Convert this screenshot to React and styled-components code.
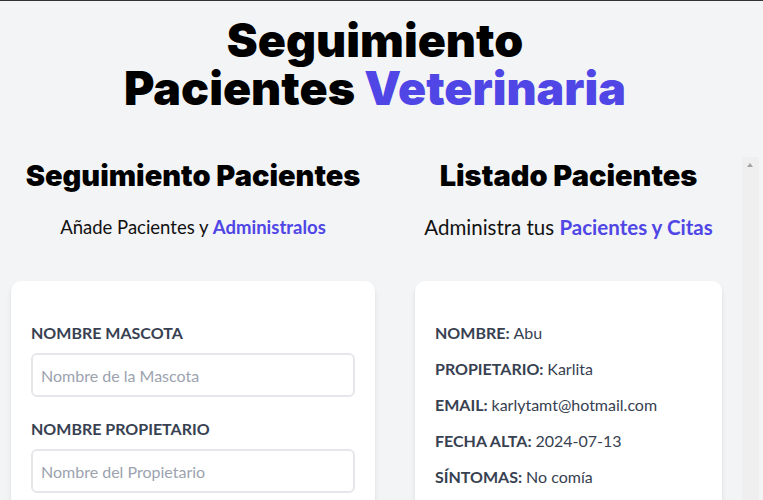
import React from "react";
import styled, { createGlobalStyle } from "styled-components";

const Global = createGlobalStyle`
  html, body { margin: 0; padding: 0; overflow: hidden; }
  body {
    background: #f3f4f6;
    font-family: Lato, "Noto Sans", sans-serif;
    color: #111827;
  }
  * { box-sizing: border-box; }
`;

const Page = styled.div`
  height: 100vh;
  overflow: hidden;
  border-top: 1px solid #333;
  padding-top: 15px;
`;

const Header = styled.header`
  width: 750px;
`;

const Title = styled.h1`
  margin: 0 auto;
  width: 540px;
  text-align: center;
  font-family: Inter, Lato, sans-serif;
  font-weight: 900;
  font-size: 46.5px;
  line-height: 48px;
  color: #000;
`;

const Accent = styled.span`
  color: #4f46e5;
  font-weight: ${(p) => (p.$bold ? 700 : "inherit")};
`;

const Columns = styled.main`
  display: flex;
  align-items: flex-start;
  margin-top: 45px;
  padding-left: 11px;
  gap: 20px;
`;

const FormColumn = styled.section`
  width: 364px;
  flex: none;
`;

const ListColumn = styled.section`
  width: 364px;
  flex: none;
  height: 100vh;
  display: flex;
`;

const ListInner = styled.div`
  flex: 1;
  min-width: 0;
  padding: 0 20px;
  overflow-y: auto;
  scrollbar-width: none;
`;

const ScrollRail = styled.div`
  width: 17px;
  flex: none;
  background: #efeff0;
  position: relative;
  &::before {
    content: "";
    position: absolute;
    left: 5px;
    top: 6px;
    border-left: 3.5px solid transparent;
    border-right: 3.5px solid transparent;
    border-bottom: 4px solid #a3a3a3;
  }
`;

const SectionTitle = styled.h2`
  margin: 0;
  padding-top: 2px;
  text-align: center;
  font-family: Inter, Lato, sans-serif;
  font-weight: 900;
  font-size: 29px;
  line-height: 34px;
  color: #000;
`;

const Lead = styled.p`
  margin: 20px 0 40px;
  text-align: center;
  font-size: ${(p) => (p.$large ? "20.5px" : "18.5px")};
  line-height: 28px;
  color: #111;
`;

const Card = styled.div`
  background: #fff;
  border-radius: 10px;
  box-shadow: 0 4px 6px -1px rgba(0, 0, 0, 0.1), 0 2px 4px -2px rgba(0, 0, 0, 0.1);
  padding: 40px 20px;
  margin-bottom: 40px;
`;

const Field = styled.div`
  margin-bottom: 20px;
`;

const Label = styled.label`
  display: block;
  color: #374151;
  text-transform: uppercase;
  font-weight: 700;
  font-size: 16px;
  line-height: 24px;
`;

const Input = styled.input`
  display: block;
  width: 100%;
  margin-top: 8px;
  padding: 8px;
  border: 2px solid #e5e7eb;
  border-radius: 6px;
  font-family: inherit;
  font-size: 16px;
  line-height: 24px;
  height: 44px;
  color: #374151;
  outline: none;
  &::placeholder { color: #9ca3af; }
`;

const Line = styled.p`
  margin: 0 0 12px;
  font-size: 16px;
  line-height: 24px;
  font-weight: 700;
  color: #374151;
  text-transform: uppercase;
`;

const Value = styled.span`
  font-weight: 400;
  text-transform: none;
`;

const Actions = styled.div`
  display: flex;
  justify-content: space-between;
  margin-top: 40px;
`;

const Button = styled.button`
  padding: 8px 40px;
  border: 0;
  border-radius: 8px;
  color: #fff;
  font-weight: 700;
  text-transform: uppercase;
  font-family: inherit;
  font-size: 16px;
  background: ${(p) => (p.$danger ? "#dc2626" : "#4f46e5")};
`;

const patients = [
  { nombre: "Abu", propietario: "Karlita", email: "karlytamt@hotmail.com", fecha: "2024-07-13", sintomas: "No comía" },
  { nombre: "Firulais", propietario: "Pedro", email: "pedro@correo.com", fecha: "2024-07-10", sintomas: "Dolor de pata" },
];

export default function App() {
  return (
    <>
      <Global />
      <Page>
        <Header>
          <Title>
            Seguimiento<br />Pacientes <Accent>Veterinaria</Accent>
          </Title>
        </Header>
        <Columns>
          <FormColumn>
            <SectionTitle>Seguimiento Pacientes</SectionTitle>
            <Lead>
              Añade Pacientes y <Accent $bold>Administralos</Accent>
            </Lead>
            <Card as="form">
              <Field>
                <Label htmlFor="mascota">Nombre Mascota</Label>
                <Input id="mascota" type="text" placeholder="Nombre de la Mascota" />
              </Field>
              <Field>
                <Label htmlFor="propietario">Nombre Propietario</Label>
                <Input id="propietario" type="text" placeholder="Nombre del Propietario" />
              </Field>
              <Field>
                <Label htmlFor="email">Email</Label>
                <Input id="email" type="email" placeholder="Email Contacto Propietario" />
              </Field>
            </Card>
          </FormColumn>
          <ListColumn>
            <ListInner>
              <SectionTitle>Listado Pacientes</SectionTitle>
              <Lead $large>
                Administra tus <Accent $bold>Pacientes y Citas</Accent>
              </Lead>
              {patients.map((p) => (
                <Card key={p.nombre}>
                  <Line>Nombre: <Value>{p.nombre}</Value></Line>
                  <Line>Propietario: <Value>{p.propietario}</Value></Line>
                  <Line>Email: <Value>{p.email}</Value></Line>
                  <Line>Fecha Alta: <Value>{p.fecha}</Value></Line>
                  <Line>Síntomas: <Value>{p.sintomas}</Value></Line>
                  <Actions>
                    <Button type="button">Editar</Button>
                    <Button type="button" $danger>Eliminar</Button>
                  </Actions>
                </Card>
              ))}
            </ListInner>
            <ScrollRail aria-hidden="true" />
          </ListColumn>
        </Columns>
      </Page>
    </>
  );
}
